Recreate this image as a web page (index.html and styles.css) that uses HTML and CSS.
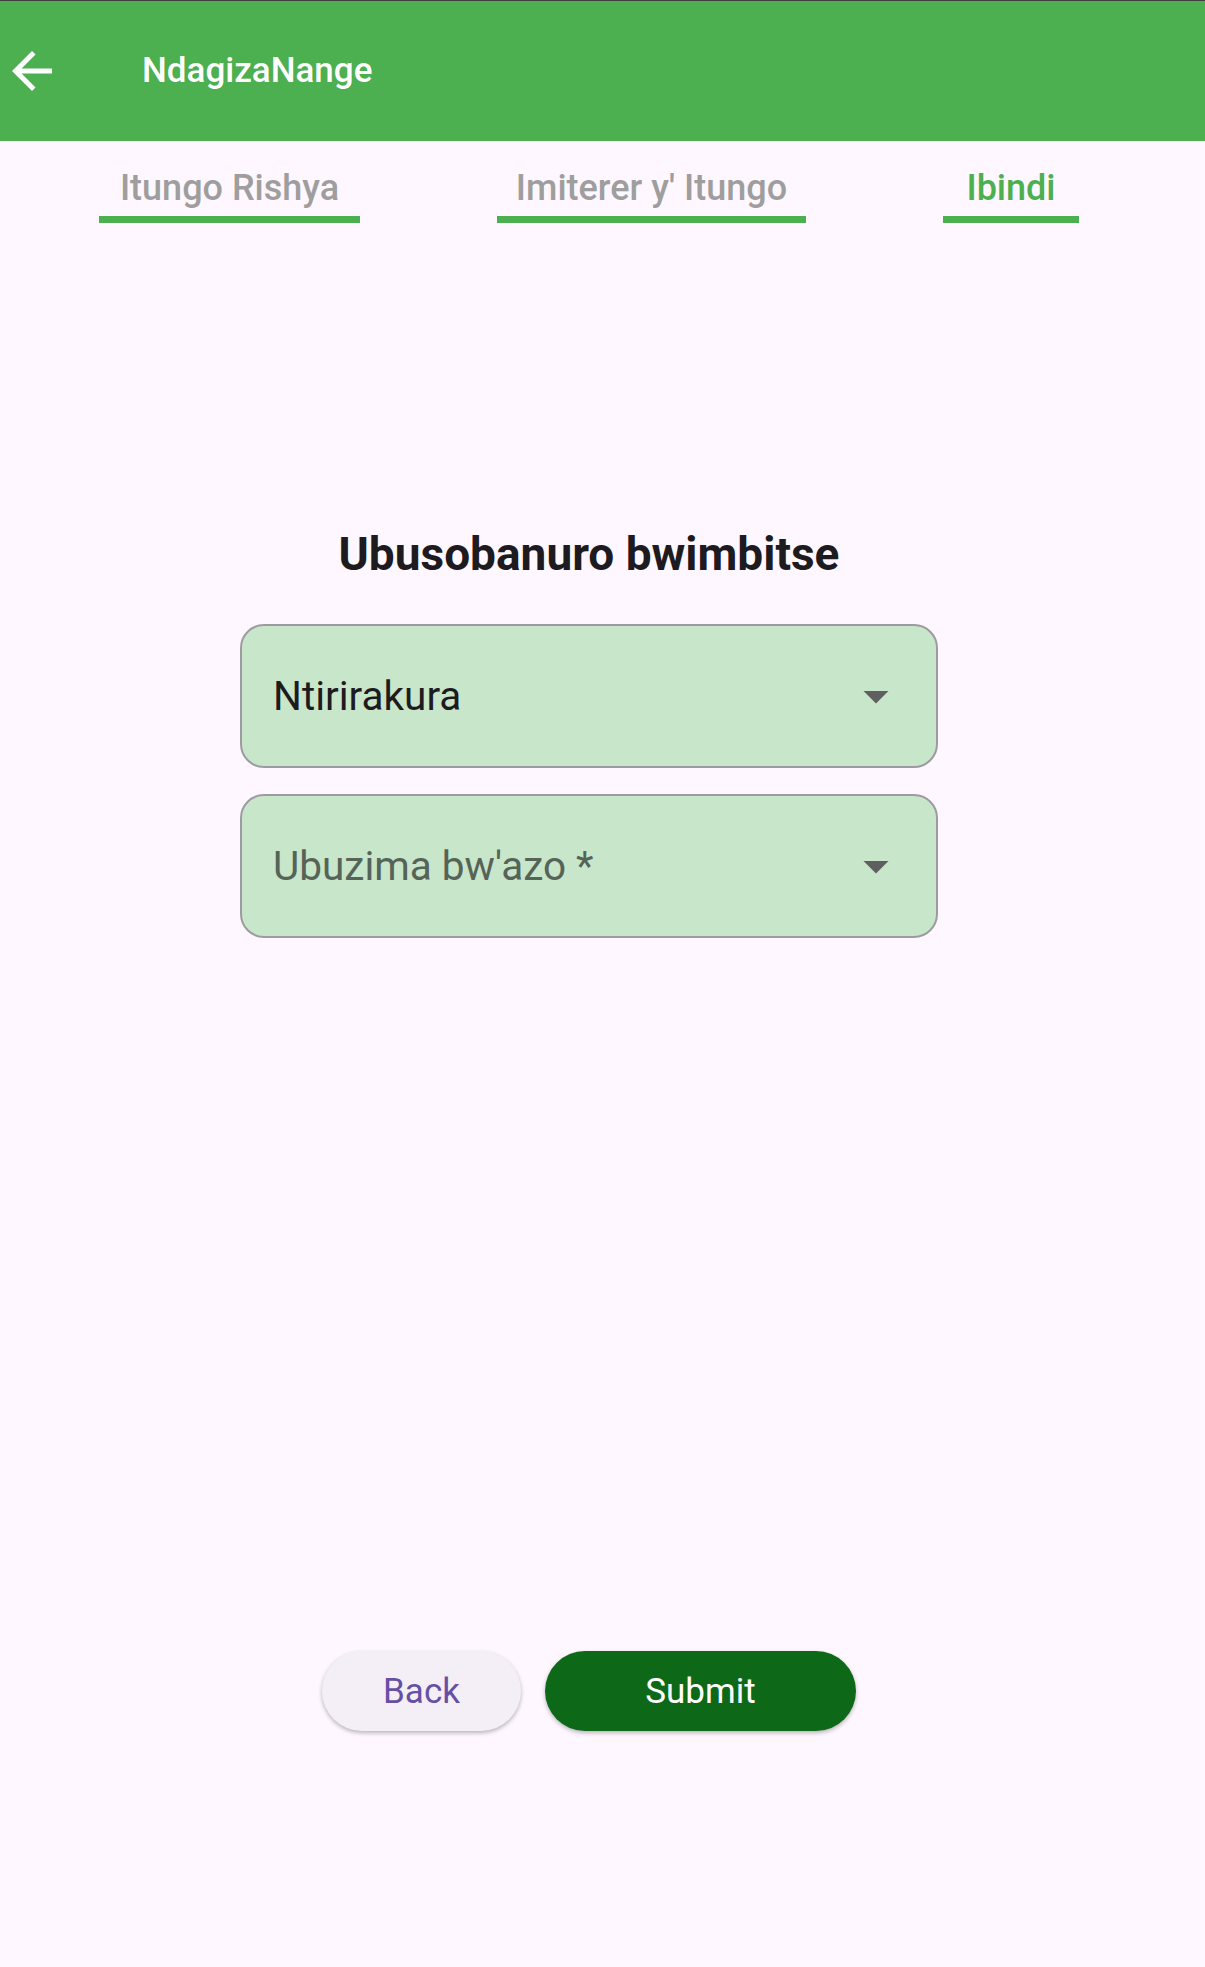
FILE: index.html
```html
<!DOCTYPE html>
<html lang="rw">
<head>
<meta charset="utf-8">
<title>NdagizaNange</title>
<link rel="stylesheet" href="styles.css">
</head>
<body>
<header class="appbar">
  <button class="appbar-back" aria-label="Back">
    <svg class="icon-back" viewBox="0 0 24 24" width="60" height="60"><path d="M20 11H7.83l5.59-5.59L12 4l-8 8 8 8 1.41-1.41L7.83 13H20v-2z"/></svg>
  </button>
  <h1 class="appbar-title">NdagizaNange</h1>
</header>
<nav class="tabs">
  <div class="tab tab-1">Itungo Rishya</div>
  <div class="tab tab-2">Imiterer y' Itungo</div>
  <div class="tab tab-3 tab-active">Ibindi</div>
</nav>
<main class="content">
  <h2 class="section-title">Ubusobanuro bwimbitse</h2>
  <div class="field">
    <span class="field-value">Ntirirakura</span>
    <svg class="field-caret" viewBox="0 0 24 24" width="60" height="60"><path d="M7 10l5 5 5-5z"/></svg>
  </div>
  <div class="field">
    <span class="field-placeholder">Ubuzima bw'azo *</span>
    <svg class="field-caret" viewBox="0 0 24 24" width="60" height="60"><path d="M7 10l5 5 5-5z"/></svg>
  </div>
  <div class="actions">
    <button class="btn btn-back">Back</button>
    <button class="btn btn-submit">Submit</button>
  </div>
</main>
</body>
</html>
```
FILE: styles.css
```css
* { box-sizing: border-box; }
html, body {
  margin: 0;
  padding: 0;
}
body {
  width: 1205px;
  min-height: 1967px;
  background: #fef7ff;
  font-family: Roboto, "Liberation Sans", sans-serif;
}
.appbar {
  height: 141px;
  border-top: 1px solid #3f3f3f;
  background: #4caf50;
  display: flex;
  align-items: center;
  padding-left: 2px;
}
.appbar-back {
  width: 60px;
  height: 60px;
  padding: 0;
  margin: 0;
  border: 0;
  background: none;
  display: flex;
}
.icon-back { fill: #ffffff; }
.appbar-title {
  margin: 0 0 0 80px;
  color: #ffffff;
  font-size: 35px;
  font-weight: 500;
  line-height: 44px;
}
.tabs {
  display: flex;
  gap: 137px;
  padding-left: 99px;
  margin-top: 25px;
}
.tab {
  font-size: 36px;
  font-weight: 500;
  line-height: 44px;
  color: #9e9e9e;
  text-align: center;
  padding-bottom: 6px;
  border-bottom: 7px solid #4caf50;
  white-space: nowrap;
}
.tab-1 { width: 261px; }
.tab-2 { width: 309px; }
.tab-3 { width: 136px; }
.tab-active { color: #4caf50; }
.content {
  width: 1178px;
  display: flex;
  flex-direction: column;
  align-items: center;
}
.section-title {
  margin: 305px 0 0;
  font-size: 46px;
  font-weight: 700;
  line-height: 52px;
  color: #1d1b20;
}
.field {
  width: 698px;
  height: 144px;
  margin-top: 44px;
  background: #c8e6c9;
  border: 2.5px solid #9e9ba0;
  border-radius: 24px;
  display: flex;
  align-items: center;
  justify-content: space-between;
  padding: 0 30px 0 31px;
}
.field + .field { margin-top: 26px; }
.field-value,
.field-placeholder {
  font-size: 40.5px;
  line-height: 48px;
}
.field-value { color: #1d1b20; }
.field-placeholder { color: #566358; }
.field-caret { fill: #5f5f5f; }
.actions {
  margin-top: 713px;
  display: flex;
  gap: 24px;
}
.btn {
  height: 80px;
  border: 0;
  border-radius: 40px;
  font-family: Roboto, "Liberation Sans", sans-serif;
  font-size: 35px;
  font-weight: 400;
  padding: 0;
}
.btn-back {
  width: 199px;
  background: #f4eff6;
  color: #6750a4;
  box-shadow: 0 2px 4px rgba(0, 0, 0, 0.28);
}
.btn-submit {
  width: 311px;
  background: #0d6917;
  color: #ffffff;
  box-shadow: 0 2px 4px rgba(0, 0, 0, 0.28);
}
```
